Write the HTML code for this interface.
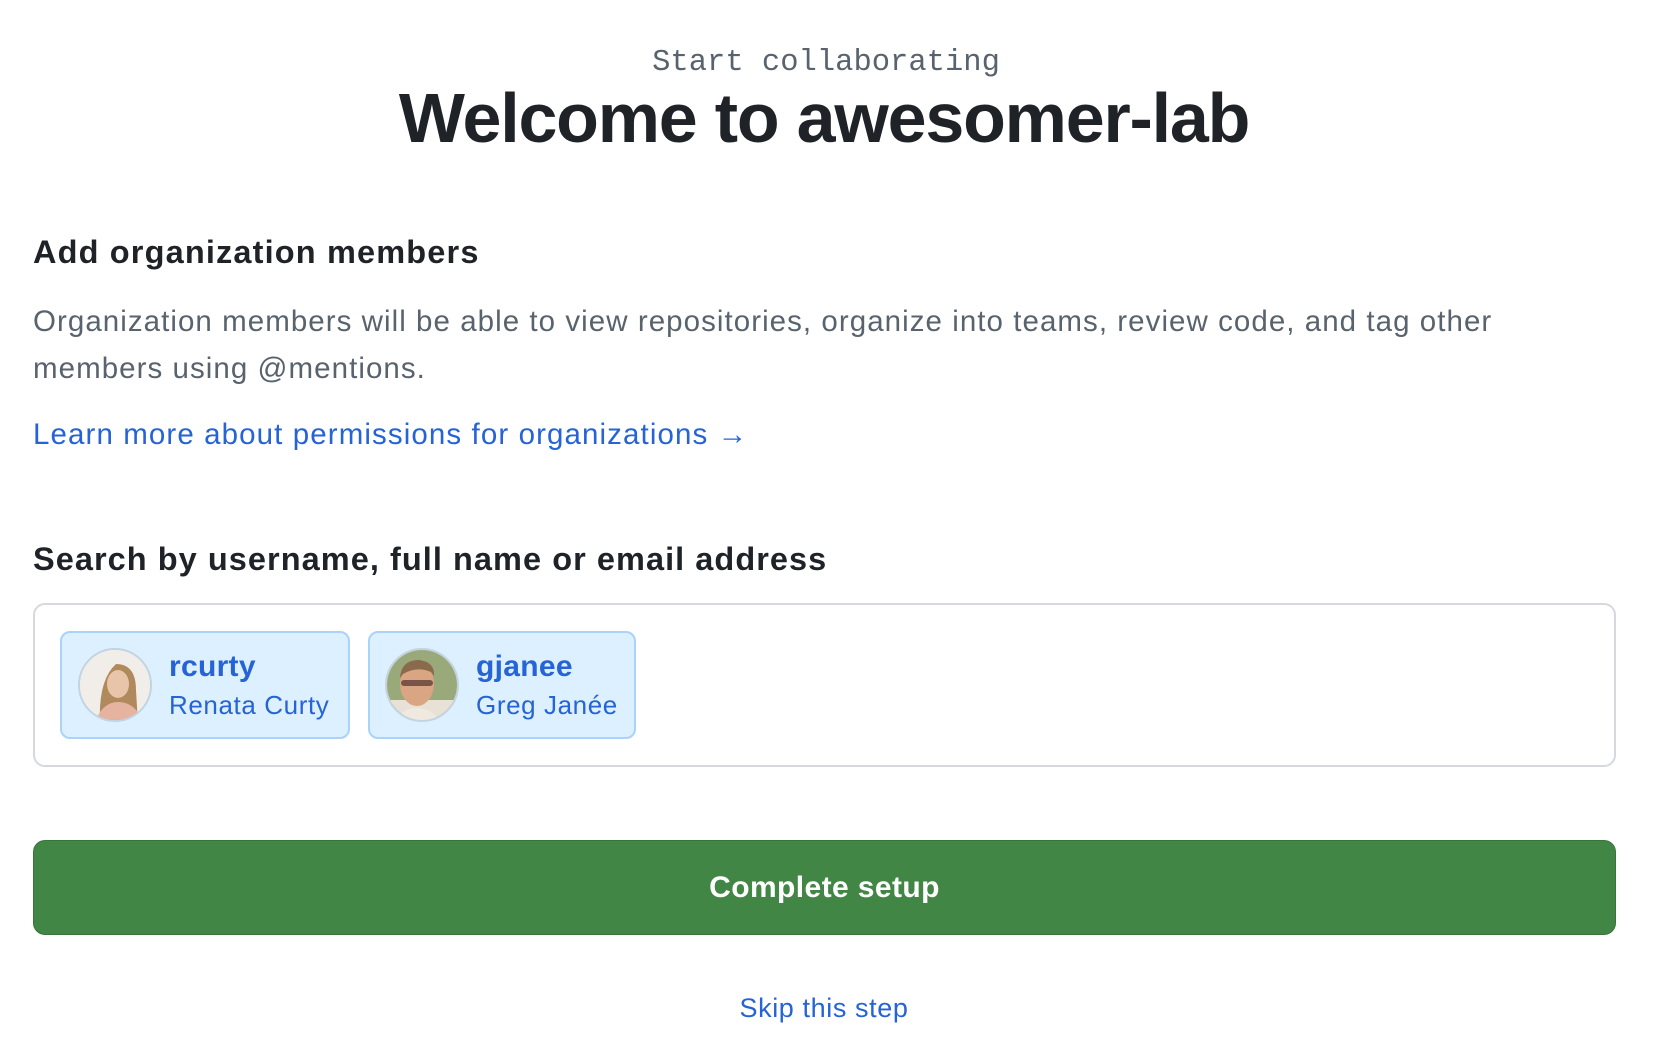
<!DOCTYPE html>
<html><head><meta charset="utf-8"><style>
*{margin:0;padding:0;box-sizing:border-box}
body{width:1660px;height:1044px;background:#fff;font-family:"Liberation Sans",sans-serif;position:relative;overflow:hidden;color:#1f2328}
.a{position:absolute;white-space:nowrap}
.mono{font-family:"Liberation Mono",monospace;font-size:30.5px;color:#59636e;left:-4px;width:1660px;text-align:center;top:46px}
h1{position:absolute;left:-6px;width:1660px;text-align:center;top:78px;font-size:70px;font-weight:bold;letter-spacing:-1.2px;color:#1f2328}
.h{font-size:32.5px;font-weight:bold;left:33px;letter-spacing:1.15px}
.p{left:33px;top:298px;font-size:29.5px;line-height:47px;color:#59636e;white-space:normal;width:1540px;letter-spacing:1.05px}
.lnk{left:33px;top:418px;font-size:29.5px;color:#2563d6;letter-spacing:1.1px}
.box{position:absolute;left:33px;top:603px;width:1583px;height:164px;border:2px solid #d5d9de;border-radius:12px}
.chip{position:absolute;top:631px;height:108px;background:#ddf0ff;border:2px solid #a9d3fb;border-radius:10px}
.av{position:absolute;top:648px;width:74px;height:74px;border-radius:50%;border:2px solid #c3d3e0;overflow:hidden}
.u{font-size:30px;font-weight:bold;color:#2563d6;letter-spacing:0.3px}
.n{font-size:26px;color:#2563d6;letter-spacing:0.6px}
.btn{position:absolute;left:33px;top:840px;width:1583px;height:95px;background:#428646;border:1px solid #3a733d;border-radius:12px;color:#fff;font-size:30px;font-weight:bold;text-align:center;line-height:93px;letter-spacing:0.4px}
.skip{left:-6px;width:1660px;text-align:center;top:993px;font-size:27px;color:#2563d6;letter-spacing:0.6px}
</style></head><body>
<div class="a mono">Start collaborating</div>
<h1>Welcome to awesomer-lab</h1>
<div class="a h" style="top:234px">Add organization members</div>
<div class="a p">Organization members will be able to view repositories, organize into teams, review code, and tag other members using @mentions.</div>
<div class="a lnk">Learn more about permissions for organizations →</div>
<div class="a h" style="top:541px;letter-spacing:1.05px">Search by username, full name or email address</div>
<div class="box"></div>
<div class="chip" style="left:60px;width:290px"></div>
<div class="av" style="left:78px"><svg width="74" height="74" viewBox="0 0 74 74"><rect width="74" height="74" fill="#f1eeea"/><path d="M20 74 Q18 30 36 14 Q56 14 56 40 L58 74Z" fill="#b08a5c"/><ellipse cx="38" cy="34" rx="11" ry="14" fill="#e8c4a8"/><path d="M14 74 Q22 52 38 52 Q56 52 64 74Z" fill="#e6b3a0"/></svg></div>
<div class="a u" style="left:169px;top:650px">rcurty</div>
<div class="a n" style="left:169px;top:690px">Renata Curty</div>
<div class="chip" style="left:368px;width:268px"></div>
<div class="av" style="left:385px"><svg width="74" height="74" viewBox="0 0 74 74"><rect width="74" height="74" fill="#9aa97a"/><rect x="0" y="50" width="74" height="24" fill="#e8e2d6"/><ellipse cx="30" cy="34" rx="17" ry="22" fill="#d9a582"/><path d="M13 28 Q14 10 32 10 Q48 12 47 26 L44 22 Q30 16 16 24Z" fill="#8a6a4c"/><rect x="14" y="30" width="32" height="6" rx="3" fill="#7a5448"/><path d="M6 74 Q14 58 30 58 Q46 58 54 74Z" fill="#efe9e0"/></svg></div>
<div class="a u" style="left:476px;top:650px">gjanee</div>
<div class="a n" style="left:476px;top:690px">Greg Janée</div>
<div class="btn">Complete setup</div>
<div class="a skip">Skip this step</div>
</body></html>
